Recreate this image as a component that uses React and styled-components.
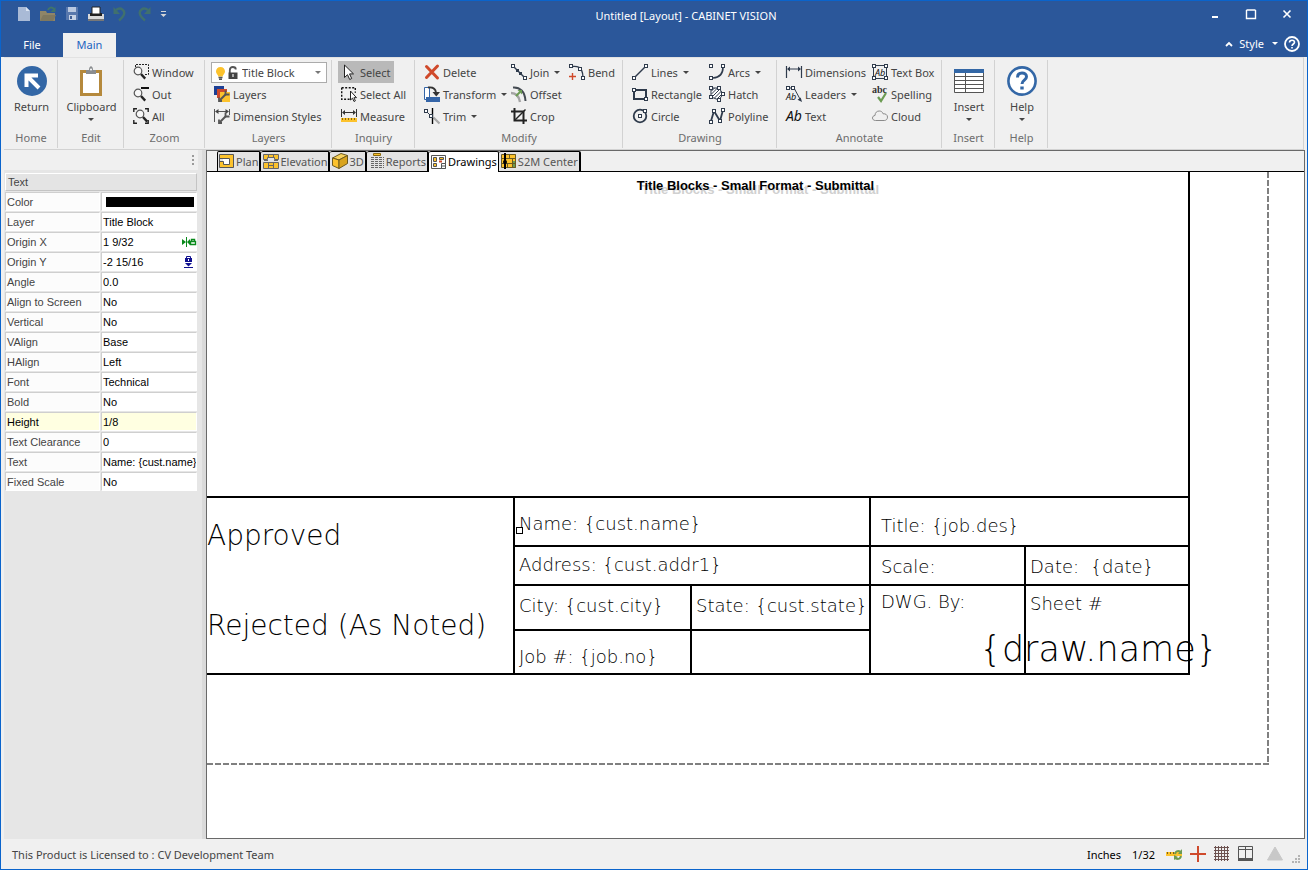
import React from "react";
import styled, { createGlobalStyle, css } from "styled-components";

const UI_FONT = '"Noto Sans", "Open Sans", sans-serif';
const GRID_FONT = '"Liberation Sans", Arial, sans-serif';
const DRAFT_FONT = '"DejaVu Sans Light", "DejaVu Sans", sans-serif';

const INK = "#2f3b4c";
const BLUE = "#2b579a";
const GOLD = "#fcc22c";

const GlobalStyle = createGlobalStyle`
  *, *::before, *::after { box-sizing: border-box; }
  body { margin: 0; font-family: ${UI_FONT}; font-size: 11px; color: #444; background: #f0f0f0; }
  button, input, select { font: inherit; color: inherit; margin: 0; }
  svg { display: block; flex: none; overflow: visible; }
`;

/* ---------- window shell ---------- */

const Window = styled.div`
  display: flex;
  flex-direction: column;
  min-height: 100vh;
  border: 1px solid #0a64cc;
  background: #f0f0f0;
`;

const TitleArea = styled.header`
  display: flex;
  flex-direction: column;
  background: ${BLUE};
  color: #fff;
`;

const TitleBar = styled.div`
  display: flex;
  align-items: center;
  height: 32px;
  padding: 0 8px 6px 12px;
`;

const QuickAccess = styled.div`
  display: flex;
  gap: 2px;
`;

const PlainButton = styled.button`
  display: flex;
  align-items: center;
  justify-content: center;
  padding: 0;
  border: 0;
  background: none;
`;

const QuickButton = styled(PlainButton)`
  width: ${(p) => (p.$narrow ? "12px" : "22px")};
  height: 20px;
`;

const WindowTitle = styled.h1`
  flex: 1;
  margin: 4px 0 0;
  font-size: 11px;
  font-weight: 400;
  line-height: 16px;
  text-align: center;
`;

const WindowControls = styled.div`
  display: flex;
  gap: 12px;
`;

const WindowButton = styled(PlainButton)`
  width: 24px;
  height: 20px;
`;

const RibbonTabs = styled.nav`
  display: flex;
  align-items: stretch;
  height: 24px;
  padding-right: 7px;
`;

const RibbonTab = styled(PlainButton)`
  width: ${(p) => (p.$active ? "53px" : "62px")};
  padding-bottom: 2px;
  background: ${(p) => (p.$active ? "#f0f0f0" : "transparent")};
  color: ${(p) => (p.$active ? "#1c63c0" : "#fff")};
`;

const RibbonTools = styled.div`
  display: flex;
  align-items: center;
  gap: 6px;
  margin-left: auto;
  padding-bottom: 3px;
`;

const StyleButton = styled(PlainButton)`
  gap: 6px;
  color: #fff;
`;

/* ---------- ribbon ---------- */

const Ribbon = styled.div`
  display: flex;
  height: 93px;
  margin: 0 3px;
  padding-top: 2px;
  border: 1px solid #d2d2d2;
  border-top-color: #e2e2e2;
  border-left: 0;
`;

const Group = styled.section`
  display: flex;
  flex-direction: column;
  width: ${(p) => p.$width}px;
  height: 88px;
  border-right: 1px solid #d2d2d2;
`;

const GroupBody = styled.div`
  display: grid;
  grid-template-columns: ${(p) => p.$columns || "1fr"};
  align-content: start;
  height: 69px;
  padding: ${(p) => (p.$big ? "6px 0 0 2px" : "1px 0 0 6px")};
  justify-items: ${(p) => (p.$big ? "center" : "start")};
`;

const GroupLabel = styled.h2`
  margin: 0;
  padding-left: 1px;
  font-size: 11px;
  font-weight: 400;
  line-height: 18px;
  text-align: center;
  color: #6d6d6d;
`;

const Column = styled.div`
  display: flex;
  flex-direction: column;
  align-items: flex-start;
`;

const SmallButton = styled.button`
  display: flex;
  align-items: center;
  gap: 3px;
  height: 22px;
  padding: 0 3px;
  border: 0;
  white-space: nowrap;
  color: #444;
  background: ${(p) => (p.$pressed ? "#b9b9b9" : "transparent")};
`;

const BigButton = styled.button`
  display: flex;
  flex-direction: column;
  align-items: center;
  padding: 0;
  border: 0;
  background: none;
  color: #444;
  line-height: 22px;
`;

const Caret = styled.span`
  width: 0;
  height: 0;
  margin-left: ${(p) => (p.$flush ? "0" : "2px")};
  border: 3px solid transparent;
  border-top-color: ${(p) => p.$color || "#444"};
  border-bottom: 0;
`;

const LayerPicker = styled.label`
  display: flex;
  align-items: center;
  width: 116px;
  height: 21px;
  margin-top: 1px;
  padding: 0 5px 0 2px;
  border: 1px solid #ababab;
  background: #fff;
`;

const LayerSelect = styled.select`
  flex: 1;
  min-width: 0;
  padding: 0 0 0 3px;
  border: 0;
  appearance: none;
  background: none;
`;

/* ---------- work area ---------- */

const WorkArea = styled.div`
  display: flex;
  flex: 1;
  margin: 0 2px 0 3px;
`;

const SidePanel = styled.aside`
  display: flex;
  flex-direction: column;
  width: 202px;
  padding-right: 4px;
  background: #e6e6e6;
  border-right: 4px solid #dadada;
`;

const PanelGrip = styled.div`
  display: flex;
  flex-direction: column;
  align-items: flex-end;
  justify-content: center;
  gap: 2px;
  height: 20px;
  padding-right: 4px;
  background: #f0f0f0;
`;

const GripDot = styled.span`
  width: 2px;
  height: 2px;
  background: #9a9a9a;
`;

const PropertyTable = styled.table`
  width: 100%;
  margin-top: 2px;
  border-collapse: separate;
  border-spacing: 1px 1px;
  table-layout: fixed;
  font-family: ${GRID_FONT};
  font-size: 11px;
`;

const PropertyHeading = styled.th`
  height: 18px;
  padding: 0 2px;
  border: 1px solid #fff;
  border-right: 1px solid #c4c4c4;
  border-bottom: 1px solid #c4c4c4;
  background: #e4e4e4;
  font-weight: 400;
  text-align: left;
`;

const cell = css`
  height: 19px;
  padding: 0 0 0 1px;
  border: 1px solid #cfcfcf;
  border-right-color: #fff;
  border-bottom-color: #fff;
  font-weight: 400;
  text-align: left;
  white-space: nowrap;
`;

const PropertyName = styled.th`
  ${cell}
  background: ${(p) => (p.$active ? "#ffffe1" : "#fcfcfc")};
  color: ${(p) => (p.$active ? "#000" : "#444")};
`;

const PropertyValue = styled.td`
  ${cell}
  background: ${(p) => (p.$active ? "#ffffe1" : "#fff")};
  color: #000;
`;

const ValueRow = styled.div`
  display: flex;
  align-items: center;
`;

const ValueInput = styled.input`
  flex: 1;
  min-width: 0;
  height: 17px;
  padding: 0;
  border: 0;
  background: transparent;
`;

const Swatch = styled.button`
  display: block;
  width: 88px;
  height: 10px;
  margin: 0 auto;
  padding: 0;
  border: 0;
  background: #000;
`;

const Document = styled.main`
  display: flex;
  flex: 1;
  flex-direction: column;
  min-width: 0;
  border: 1px solid #696969;
`;

const DocumentTabs = styled.div`
  display: flex;
  height: 21px;
  padding-left: 10px;
  background: #f0f0f0;
  border-bottom: 1px solid #000;
`;

const DocumentTab = styled.button`
  display: flex;
  align-items: center;
  gap: 1px;
  height: ${(p) => (p.$active ? "21px" : "20px")};
  padding: 0 1px 1px;
  padding-left: ${(p) => (p.$first ? "1px" : "2px")};
  border: 1px solid #000;
  border-bottom: 0;
  border-left-width: ${(p) => (p.$first ? "1px" : "0")};
  border-right-width: ${(p) => (p.$active ? "1px" : "2px")};
  border-radius: 2px 2px 0 0;
  background: ${(p) => (p.$active ? "#fff" : "#e3e3e3")};
  color: ${(p) => (p.$active ? "#000" : "#555")};
  white-space: nowrap;
`;

const Canvas = styled.div`
  flex: 1;
  padding-right: 35px;
  background: #fff;
  color: #000;
  overflow: hidden;
`;

const Sheet = styled.div`
  position: relative;
  padding: 0 79px 90px 0;
  background:
    repeating-linear-gradient(to bottom, #808080 0 6px, transparent 6px 8px) top right / 2px 100% no-repeat,
    repeating-linear-gradient(to left, #808080 0 6px, transparent 6px 8px) bottom left / 100% 2px no-repeat;
`;

const SheetTitle = styled.h2`
  position: absolute;
  top: 5px;
  left: 35px;
  right: 0;
  margin: 0;
  font: 700 13px/18px ${GRID_FONT};
  text-align: center;
  text-shadow: 5px 4px 0 #d0d0d0;
`;

const Frame = styled.div`
  border-right: 2px solid #000;
  border-bottom: 2px solid #000;
  padding-top: 324px;
`;

const TitleBlock = styled.div`
  position: relative;
  display: grid;
  grid-template-columns: 306fr 177fr 179fr 155fr 164fr;
  grid-template-rows: 49px 39px 45px 44px;
  font-family: ${DRAFT_FONT};
  font-weight: 200;
`;

const BlockCell = styled.div`
  grid-column: ${(p) => p.$col};
  grid-row: ${(p) => p.$row};
  min-width: 0;
  padding: ${(p) => p.$top || 0}px 0 0 ${(p) => (p.$wide ? "10px" : "4px")};
  border-top: 2px solid #000;
  border-left: 2px solid #000;
  font-size: 18px;
  line-height: 24px;
  white-space: pre;
`;

const ApprovalCell = styled.div`
  display: flex;
  flex-direction: column;
  gap: 54px;
  grid-column: 1;
  grid-row: 1 / -1;
  padding-top: 20px;
  border-top: 2px solid #000;
  font-size: 28px;
  line-height: 36px;
  white-space: nowrap;
`;

const DrawingName = styled.div`
  position: absolute;
  right: -30px;
  bottom: 0;
  font-size: 35px;
  line-height: 48px;
`;

const GripHandle = styled.span`
  position: relative;
`;

const HandleBox = styled.span`
  position: absolute;
  left: -3px;
  bottom: 0;
  width: 7px;
  height: 7px;
  border: 1px solid #000;
  background: #fff;
`;

/* ---------- status bar ---------- */

const StatusBar = styled.footer`
  display: flex;
  align-items: center;
  height: 30px;
  padding: 0 6px 0 11px;
`;

const StatusTools = styled.div`
  display: flex;
  align-items: center;
  gap: 8px;
  margin-left: auto;
  color: #000;
`;

const StatusText = styled.span`
  margin-right: 3px;
`;

const StatusViews = styled.div`
  display: flex;
  gap: 8px;
  margin-right: 5px;
`;

/* ---------- icons ---------- */

const Svg = ({ w = 16, h = 16, children, ...rest }) => (
  <svg width={w} height={h} viewBox={`0 0 ${w} ${h}`} fill="none" aria-hidden="true" {...rest}>
    {children}
  </svg>
);

const Node = ({ x, y, c = INK }) => (
  <rect x={x + 0.5} y={y + 0.5} width="3" height="3" fill="#fff" stroke={c} />
);

const Lens = () => (
  <>
    <circle cx="5" cy="7" r="3.8" fill="#f7f7f7" stroke="#555" strokeWidth="1.2" />
    <path d="M8 10l4.2 4.6" stroke="#222" strokeWidth="2.4" />
  </>
);

const Wrench = () => (
  <>
    <path d="M6 14l6-6" stroke="#555" strokeWidth="2" />
    <path d="M11.500 4.500v4h4M5 11.500v3.500h3" stroke="#555" strokeWidth="1.800" />
  </>
);

const icons = {
  zoomWindow: (
    <Svg>
      <path d="M2.500 3V.5H15.500v10H12" stroke="#222" strokeDasharray="2 1" />
      <Lens />
    </Svg>
  ),
  zoomOut: (
    <Svg>
      <Lens />
      <path d="M8 2h8" stroke="#111" strokeWidth="2" />
    </Svg>
  ),
  zoomAll: (
    <Svg>
      <path d="M.8 4V.8H4M12 .8h3.200V4M.8 12v3.200H4M12 15.200h3.200V12" stroke="#222" strokeWidth="1.400" />
      <g transform="translate(2 -1)"><Lens /></g>
    </Svg>
  ),
  layers: (
    <Svg>
      <path d="M0 0h10v9H0z" fill="#1d3f94" />
      <path d="M3 3h10v9H3z" fill="#cf4a2c" />
      <path d="M6 6h10v10H6z" fill={GOLD} />
      <Wrench />
    </Svg>
  ),
  dimStyles: (
    <Svg>
      <path d="M.5 1v13M15.500 1v6M2 3.500h12" stroke="#555" />
      <path d="M1 3.500L4.500 1v5zM15 3.500L11.500 1v5z" fill="#444" />
      <Wrench />
    </Svg>
  ),
  bulb: (
    <Svg w={13} h={16}>
      <path d="M6.500 2C3.800 2 2 4 2 6.300c0 1.700.900 2.700 1.700 3.700.4.500.5 1.200.5 1.500h4.600c0-.3.100-1 .500-1.500.8-1 1.700-2 1.700-3.700C11 4 9.200 2 6.500 2z" fill={GOLD} />
      <path d="M4.500 12.500h4M5 14.200h3" stroke="#555" strokeWidth="1.400" />
    </Svg>
  ),
  lock: (
    <Svg w={12} h={16}>
      <path d="M2.800 8V5.200C2.800 3 4.200 2 5.800 2s3 1 3 2.400" stroke="#555" strokeWidth="1.800" />
      <path d="M1.500 7.500h9v6.500h-9z" fill="#444" />
      <path d="M6 9v3" stroke="#ddd" strokeWidth="1.400" />
    </Svg>
  ),
  select: (
    <Svg>
      <path d="M3.500 1v12.500l3-2.800 2.200 4.800 2-1-2.200-4.600h4z" fill="#fff" stroke="#222" />
    </Svg>
  ),
  selectAll: (
    <Svg>
      <path d="M.7 1.700h13.600v5M.7 1.700v11.600H9" stroke="#111" strokeWidth="1.400" strokeDasharray="2 1.500" />
      <path d="M9.500 5v9l2-1.800 1.500 3.300 1.400-.7-1.500-3.100h2.600z" fill="#fff" stroke="#222" />
    </Svg>
  ),
  measure: (
    <Svg>
      <path d="M.5 1v8M15.500 1v8M2 4.500h12" stroke="#333" />
      <path d="M1 4.500L4 2v5zM15 4.500L12 2v5z" fill="#333" />
      <path d="M0 10h16v4H0z" fill={GOLD} />
      <path d="M1.500 10v2M4.500 10v2M7.500 10v2M10.500 10v2M13.500 10v2" stroke="#8a6a10" />
    </Svg>
  ),
  delete: (
    <Svg>
      <path d="M2.500 2.500l11 11.500M13.500 2L2.500 13.500" stroke="#d0492a" strokeWidth="3" strokeLinecap="round" />
    </Svg>
  ),
  transform: (
    <Svg>
      <path d="M.5 1.500h5v12h-5z" fill="#fff" stroke="#3465a8" />
      <path d="M2 11h14v5H2z" fill="#3465a8" />
      <path d="M4 1.500c4-.5 7.500 1 8 5" stroke="#333" strokeWidth="1.800" />
      <path d="M8.500 6H16l-3.700 4.500z" fill="#333" />
    </Svg>
  ),
  trim: (
    <Svg>
      <path d="M2 3l5 5" stroke={INK} />
      <path d="M9.500 9.500l6 6" stroke="#a8a8a8" strokeWidth="2.200" />
      <path d="M8.500 0v16" stroke="#000" strokeWidth="1.400" />
      <Node x={0} y={1} /><Node x={5} y={6} />
    </Svg>
  ),
  join: (
    <Svg>
      <path d="M2 2l12 12" stroke={INK} strokeWidth="1.400" />
      <Node x={0} y={0} /><Node x={12} y={12} />
      <path d="M5 5h3v3H5zM8 8h3v3H8z" fill={INK} />
    </Svg>
  ),
  offset: (
    <Svg>
      <path d="M2 1.500c7-.5 12 4 12.500 13.500" stroke="#444b52" strokeWidth="2" />
      <path d="M0 7c4.500 0 8 3 9 9" stroke="#a4a4a4" strokeWidth="2.400" />
      <path d="M5 10l4-4" stroke="#6b9b52" strokeWidth="2" />
      <path d="M6.500 4H11v4.500z" fill="#6b9b52" />
    </Svg>
  ),
  crop: (
    <Svg>
      <path d="M3.500 0v12.500H16M0 3.500h12.500V16" stroke="#222" strokeWidth="2" />
      <path d="M4 12L14.500 1.500" stroke="#222" strokeWidth="1.400" />
    </Svg>
  ),
  bend: (
    <Svg>
      <path d="M3 2.500c5-.5 8.500 1 9.500 3.500 1 2 1.500 5 1.500 8" stroke={INK} strokeWidth="1.400" />
      <Node x={0} y={0} /><Node x={9} y={3} /><Node x={12} y={12} />
      <path d="M3.500 9v7M0 12.500h7" stroke="#d0492a" strokeWidth="1.400" />
    </Svg>
  ),
  lines: (
    <Svg>
      <path d="M3 13L13 3" stroke={INK} strokeWidth="1.400" />
      <Node x={0} y={12} /><Node x={12} y={0} />
    </Svg>
  ),
  rectangle: (
    <Svg>
      <path d="M2 4h12v9H2z" stroke={INK} strokeWidth="2" />
      <Node x={0} y={2} /><Node x={12} y={11} />
    </Svg>
  ),
  circle: (
    <Svg>
      <circle cx="8" cy="8" r="6.300" stroke={INK} strokeWidth="1.800" />
      <Node x={6} y={6} /><Node x={11} y={1} />
    </Svg>
  ),
  arcs: (
    <Svg>
      <path d="M14 3c0 7-3 10.500-10 11" stroke={INK} strokeWidth="1.600" />
      <Node x={0} y={0} /><Node x={12} y={0} /><Node x={0} y={12} />
    </Svg>
  ),
  hatch: (
    <Svg>
      <path d="M2 2h8l4 6-4 6-8-3z" fill="#fff" stroke={INK} />
      <path d="M2.500 5L5.500 2M2.500 8l6-6M3 11l8-8M5.500 12l7-7M8 13l5.500-5.500" stroke={INK} />
      <Node x={0} y={0} /><Node x={8} y={0} /><Node x={12} y={6} /><Node x={0} y={9} /><Node x={8} y={12} />
    </Svg>
  ),
  polyline: (
    <Svg>
      <path d="M2 13L5 3l6 10 3-11" stroke={INK} strokeWidth="1.800" />
      <Node x={0} y={12} /><Node x={3} y={1} /><Node x={9} y={11} /><Node x={12} y={0} />
    </Svg>
  ),
  dimensions: (
    <Svg>
      <path d="M.5 2v12M15.500 2v12M2 5h12" stroke={INK} strokeWidth="1.200" />
      <path d="M1 5l3-2.500v5zM15 5l-3-2.500v5z" fill={INK} />
    </Svg>
  ),
  leaders: (
    <Svg>
      <path d="M3 2h5l6 11" stroke={INK} />
      <path d="M16 16l-4.500-2.200 3.200-2.300z" fill={INK} />
      <Node x={0} y={0} /><Node x={5} y={0} />
      <text x="0" y="14" fontSize="9" fontStyle="italic" fill="#111" fontFamily={UI_FONT}>Ab</text>
    </Svg>
  ),
  text: (
    <Svg>
      <text x="0" y="13" fontSize="14" fontStyle="italic" fill="#111" fontFamily={UI_FONT}>Ab</text>
    </Svg>
  ),
  textBox: (
    <Svg>
      <path d="M1.500 1.500h13v13h-13z" stroke={INK} />
      <Node x={0} y={0} /><Node x={12} y={0} /><Node x={0} y={12} /><Node x={12} y={12} />
      <text x="3" y="12" fontSize="9" fontStyle="italic" fill="#111" fontFamily={UI_FONT}>Ab</text>
    </Svg>
  ),
  spelling: (
    <Svg>
      <text x="0" y="7" fontSize="10" fontWeight="700" fill="#333" fontFamily='"Liberation Serif", serif'>abc</text>
      <path d="M6 11l3 4 5-8" stroke="#6b9b52" strokeWidth="2.200" />
    </Svg>
  ),
  cloud: (
    <Svg>
      <path d="M3.500 12.500C1.500 12.500.500 11.300.500 10S1.500 7.500 3 7.500C3 4.500 5 3 7.200 3c2 0 3.300 1 3.900 2.800 2.400-.3 4.400 1 4.400 3.300 0 2-1.300 3.400-3.200 3.400z" stroke="#8a8a8a" />
    </Svg>
  ),
  return: (
    <Svg w={30} h={30}>
      <circle cx="15" cy="15" r="15" fill="#3367a6" />
      <path d="M9.500 21V9.500H21M10 10l12 12" stroke="#fff" strokeWidth="4" />
    </Svg>
  ),
  clipboard: (
    <Svg w={24} h={30}>
      <path d="M2.500 5.500h19v23h-19z" fill="#fff" stroke="#b5893c" strokeWidth="3" />
      <path d="M7 8V4h3c0-5 4-5 4 0h3v4z" fill="#8a8d90" />
      <circle cx="12" cy="3.500" r="1" fill="#fff" />
    </Svg>
  ),
  insert: (
    <Svg w={30} h={30}>
      <path d="M.5 3.500h29v23H.5z" fill="#fff" stroke="#555" />
      <path d="M0 3h30v4H0z" fill="#3367a6" />
      <path d="M0 10.500h30M0 14.500h30M0 18.500h30M0 22.500h30M11.500 7v19" stroke="#555" />
    </Svg>
  ),
  help: (
    <Svg w={30} h={30}>
      <circle cx="15" cy="15" r="13.600" fill="#fff" stroke="#3367a6" strokeWidth="2.600" />
      <path d="M10.500 11.500c0-3 2-4.500 4.500-4.500s4.500 1.400 4.500 3.800c0 3.500-4.500 3.300-4.500 7.200" stroke="#3367a6" strokeWidth="3" />
      <path d="M13.300 20.500h3.400v3h-3.400z" fill="#3367a6" />
    </Svg>
  ),
  newDoc: (
    <Svg>
      <path d="M2 1h8l4 4v10H2z" fill="#a9bad6" />
      <path d="M10 1v4h4z" fill="#dbe4f2" />
    </Svg>
  ),
  open: (
    <Svg>
      <path d="M0 5h6l1 2h8v8H0z" fill="#8f8568" />
      <path d="M3 9h13l-3 6H0z" fill="#7f785f" />
      <path d="M8 4c1-3 4-3 6-1" stroke="#40756a" strokeWidth="2" />
      <path d="M15.500 1v5h-5z" fill="#40756a" />
    </Svg>
  ),
  save: (
    <Svg>
      <path d="M2 1h12v13H2z" fill="#5878ad" />
      <path d="M4 1h8v5H4z" fill="#b9c8e0" />
      <path d="M5 9h7v5H5z" fill="#c6d2e6" />
      <path d="M6 10h2v3H6z" fill="#3f5f96" />
    </Svg>
  ),
  print: (
    <Svg>
      <path d="M0 8h16v6H0z" fill="#d9d9d9" />
      <path d="M2 7h12v3H2z" fill="#222" />
      <path d="M4 1h8v7H4z" fill="#fff" stroke="#222" />
      <path d="M0 13h16v2H0z" fill="#777" />
    </Svg>
  ),
  undo: (
    <Svg>
      <path d="M4 4c5-4 10 1 7.500 5.500-.8 1.700-2.500 3.300-4.500 5" stroke="#40706e" strokeWidth="2.400" />
      <path d="M1.500 1v7h6.500z" fill="#40706e" />
    </Svg>
  ),
  redo: (
    <Svg>
      <path d="M12 4C7 0 2 5 4.500 9.500c.8 1.700 2.500 3.300 4.500 5" stroke="#40706e" strokeWidth="2.400" />
      <path d="M14.500 1v7H8z" fill="#40706e" />
    </Svg>
  ),
  more: (
    <Svg w={7} h={8}>
      <path d="M1 1.500h5" stroke="#d6d6d6" />
      <path d="M.5 4h6L3.500 7z" fill="#d6d6d6" />
    </Svg>
  ),
  minimize: <Svg w={10} h={10}><path d="M2 8h6" stroke="#fff" strokeWidth="2" /></Svg>,
  maximize: <Svg w={10} h={10}><path d="M.5 1h9M.5 1v8.500h9V1" stroke="#fff" strokeWidth="1.400" /></Svg>,
  close: <Svg w={10} h={10}><path d="M1.500 1.500l7 7M8.500 1.500l-7 7" stroke="#fff" strokeWidth="1.600" /></Svg>,
  collapse: <Svg w={8} h={6}><path d="M1 5l3-3 3 3" stroke="#fff" strokeWidth="1.800" /></Svg>,
  helpSmall: (
    <Svg w={16} h={16}>
      <circle cx="8" cy="8" r="7" stroke="#fff" strokeWidth="1.800" />
      <path d="M5.500 6.500C5.500 5 6.500 4.200 8 4.200s2.500.8 2.500 2.100C10.500 8 8 8 8 10" stroke="#fff" strokeWidth="1.600" />
      <path d="M7.200 11h1.600v1.600H7.200z" fill="#fff" />
    </Svg>
  ),
  plan: (
    <Svg>
      <path d="M.5 1.500h14v13H.5z" fill={GOLD} stroke="#555" />
      <path d="M1 5.500h9.500v6H4.500v-3H1z" fill="#fff" stroke="#555" />
      <path d="M1 6h3v2H1z" fill="#e3e3e3" />
    </Svg>
  ),
  elevation: (
    <Svg>
      <path d="M.5 1.500h15v5h-4v-2h-7v2h-4zM.5 9.500h15v6H.5z" fill={GOLD} stroke="#666" />
      <path d="M5.500 1.500v3M10.500 1.500v3M5.500 9.500v6M10.500 9.500v6M5.500 12.500h5M1 7.500h4M11 7.500h4" stroke="#666" />
    </Svg>
  ),
  cube: (
    <Svg>
      <path d="M.5 5L9 .5l6.500 2L7 7z" fill="#f8d25c" stroke="#6d5a1e" />
      <path d="M.5 5L7 7v8.500L.500 12.500z" fill={GOLD} stroke="#6d5a1e" />
      <path d="M7 7l8.500-4.500v8L7 15.500z" fill="#d9a41e" stroke="#6d5a1e" />
    </Svg>
  ),
  reports: (
    <Svg>
      <path d="M4.500.500h7v2h-7z" fill={GOLD} stroke="#8a6a10" />
      <path d="M2 4.500h13M2 6.500h13M2 8.500h13M2 10.500h13M2 12.500h13M2 14.500h13" stroke="#666" strokeDasharray="3 1" />
    </Svg>
  ),
  drawings: (
    <Svg>
      <path d="M.5 1.500h14v13H.5z" fill="#fff" stroke="#555" />
      <path d="M2.500 3.500h3v4h-3zM8.500 3.500h4v2h-4zM2.500 9.500h3v3h-3z" fill={GOLD} stroke="#555" />
      <path d="M8 7.500h3" stroke="#cf4a2c" strokeWidth="2" />
      <path d="M10.500 9.500h4v5h-4zM10.500 12h4" fill="#fff" stroke="#555" />
    </Svg>
  ),
  s2m: (
    <Svg>
      <path d="M1 1h14v14H1z" fill={GOLD} />
      <path d="M11 8h4v7h-4z" fill="#6b9b52" />
      <path d="M.5 1.500h14v13H.5zM1 5.500h14M1 10.500h14M8.500 1v4M11.500 5v10M6.500 10v5" stroke="#6b5a20" />
      <path d="M4 0v16" stroke="#000" strokeWidth="2" />
      <circle cx="4" cy="9" r="2" fill="#000" />
    </Svg>
  ),
  lockX: (
    <Svg w={14} h={10}>
      <path d="M4.500 0v10" stroke="#0a8a1c" />
      <path d="M0 2l4 3-4 3zM8 2L5 5l3 3z" fill="#0a8a1c" />
      <path d="M8.500 4.500h5v3h-5zM9.500 4V2.500h3V4" stroke="#0a8a1c" strokeWidth="1.400" />
    </Svg>
  ),
  lockY: (
    <Svg w={14} h={12}>
      <path d="M4.500 2.500V.5h4v2" stroke="#101090" />
      <path d="M3 2h7v4H3z" fill="#101090" />
      <path d="M6 3h1v2H6z" fill="#fff" />
      <path d="M3 7h7L6.500 10.500z" fill="#101090" />
      <path d="M2 11.500h9" stroke="#101090" />
    </Svg>
  ),
  ruler: (
    <Svg>
      <path d="M0 6h16v4H0z" fill={GOLD} />
      <path d="M1.500 6v2M4.500 6v2M7.500 6v2" stroke="#7a6020" />
      <path d="M9 8c1-4 4-3 6-2M15 10c-1 4-4 3-6 2" stroke="#6b9b52" strokeWidth="2" />
      <path d="M16 3v5h-4zM8 14V9l4 2z" fill="#6b9b52" />
    </Svg>
  ),
  cross: <Svg><path d="M8 0v16M0 8h16" stroke="#cf4a2c" strokeWidth="2" /></Svg>,
  gridDots: (
    <Svg>
      <path d="M1.500 0v15M4.500 0v15M7.500 0v15M10.500 0v15M13.500 0v15M0 1.500h15M0 4.500h15M0 7.500h15M0 10.500h15M0 13.500h15" stroke="#6d5250" />
    </Svg>
  ),
  splitView: (
    <Svg>
      <path d="M.5.500h14v14H.5zM7.500 0v13M1 3.500h14" stroke="#555" />
      <path d="M0 12h15v3H0z" fill="#555" />
    </Svg>
  ),
  warning: <Svg><path d="M8 1l7.500 13H.5z" fill="#c8c8c8" stroke="#c8c8c8" strokeLinejoin="round" /></Svg>,
  sizeGrip: (
    <Svg w={10} h={16}>
      <path d="M7 9h2v2H7zM4 12h2v2H4zM7 12h2v2H7zM1 15h2v2H1zM4 15h2v2H4zM7 15h2v2H7z" fill="#b4b4b4" />
    </Svg>
  ),
};

/* ---------- composed parts ---------- */

const Tool = ({ icon, label, menu, pressed }) => (
  <SmallButton type="button" $pressed={pressed} aria-pressed={pressed}>
    {icons[icon]}
    {label}
    {menu && <Caret />}
  </SmallButton>
);

const BigTool = ({ icon, label, menu }) => (
  <BigButton type="button">
    {icons[icon]}
    {label}
    {menu && <Caret $flush />}
  </BigButton>
);

const RibbonGroup = ({ label, width, columns, big, children }) => (
  <Group $width={width} aria-label={label}>
    <GroupBody $columns={columns} $big={big}>{children}</GroupBody>
    <GroupLabel>{label}</GroupLabel>
  </Group>
);

const properties = [
  ["Color", null],
  ["Layer", "Title Block"],
  ["Origin X", "1 9/32", "lockX"],
  ["Origin Y", "-2 15/16", "lockY"],
  ["Angle", "0.0"],
  ["Align to Screen", "No"],
  ["Vertical", "No"],
  ["VAlign", "Base"],
  ["HAlign", "Left"],
  ["Font", "Technical"],
  ["Bold", "No"],
  ["Height", "1/8"],
  ["Text Clearance", "0"],
  ["Text", "Name: {cust.name}"],
  ["Fixed Scale", "No"],
];

const documentTabs = [
  ["plan", "Plan"],
  ["elevation", "Elevation"],
  ["cube", "3D"],
  ["reports", "Reports"],
  ["drawings", "Drawings"],
  ["s2m", "S2M Center"],
];

const quickActions = [
  ["newDoc", "New"],
  ["open", "Open"],
  ["save", "Save"],
  ["print", "Print"],
  ["undo", "Undo"],
  ["redo", "Redo"],
];

export default function App() {
  return (
    <>
      <GlobalStyle />
      <Window>
        <TitleArea>
          <TitleBar>
            <QuickAccess>
              {quickActions.map(([icon, label]) => (
                <QuickButton key={icon} type="button" aria-label={label}>{icons[icon]}</QuickButton>
              ))}
              <QuickButton $narrow type="button" aria-label="Customize">{icons.more}</QuickButton>
            </QuickAccess>
            <WindowTitle>Untitled [Layout] - CABINET VISION</WindowTitle>
            <WindowControls>
              <WindowButton type="button" aria-label="Minimize">{icons.minimize}</WindowButton>
              <WindowButton type="button" aria-label="Maximize">{icons.maximize}</WindowButton>
              <WindowButton type="button" aria-label="Close">{icons.close}</WindowButton>
            </WindowControls>
          </TitleBar>
          <RibbonTabs>
            <RibbonTab type="button">File</RibbonTab>
            <RibbonTab type="button" $active>Main</RibbonTab>
            <RibbonTools>
              <PlainButton type="button" aria-label="Collapse ribbon">{icons.collapse}</PlainButton>
              <StyleButton type="button">Style<Caret $color="#fff" /></StyleButton>
              <PlainButton type="button" aria-label="Help">{icons.helpSmall}</PlainButton>
            </RibbonTools>
          </RibbonTabs>
        </TitleArea>

        <Ribbon>
          <RibbonGroup label="Home" width={54} big>
            <BigTool icon="return" label="Return" />
          </RibbonGroup>
          <RibbonGroup label="Edit" width={66} big>
            <BigTool icon="clipboard" label="Clipboard" menu />
          </RibbonGroup>
          <RibbonGroup label="Zoom" width={81}>
            <Column>
              <Tool icon="zoomWindow" label="Window" />
              <Tool icon="zoomOut" label="Out" />
              <Tool icon="zoomAll" label="All" />
            </Column>
          </RibbonGroup>
          <RibbonGroup label="Layers" width={127}>
            <Column>
              <LayerPicker>
                {icons.bulb}
                {icons.lock}
                <LayerSelect aria-label="Current layer" defaultValue="Title Block">
                  <option>Title Block</option>
                </LayerSelect>
                <Caret $flush $color="#777" />
              </LayerPicker>
              <Tool icon="layers" label="Layers" />
              <Tool icon="dimStyles" label="Dimension Styles" />
            </Column>
          </RibbonGroup>
          <RibbonGroup label="Inquiry" width={83}>
            <Column>
              <Tool icon="select" label="Select" pressed />
              <Tool icon="selectAll" label="Select All" />
              <Tool icon="measure" label="Measure" />
            </Column>
          </RibbonGroup>
          <RibbonGroup label="Modify" width={208} columns="87px 58px 1fr">
            <Column>
              <Tool icon="delete" label="Delete" />
              <Tool icon="transform" label="Transform" menu />
              <Tool icon="trim" label="Trim" menu />
            </Column>
            <Column>
              <Tool icon="join" label="Join" menu />
              <Tool icon="offset" label="Offset" />
              <Tool icon="crop" label="Crop" />
            </Column>
            <Column>
              <Tool icon="bend" label="Bend" />
            </Column>
          </RibbonGroup>
          <RibbonGroup label="Drawing" width={154} columns="77px 1fr">
            <Column>
              <Tool icon="lines" label="Lines" menu />
              <Tool icon="rectangle" label="Rectangle" />
              <Tool icon="circle" label="Circle" />
            </Column>
            <Column>
              <Tool icon="arcs" label="Arcs" menu />
              <Tool icon="hatch" label="Hatch" />
              <Tool icon="polyline" label="Polyline" />
            </Column>
          </RibbonGroup>
          <RibbonGroup label="Annotate" width={165} columns="86px 1fr">
            <Column>
              <Tool icon="dimensions" label="Dimensions" />
              <Tool icon="leaders" label="Leaders" menu />
              <Tool icon="text" label="Text" />
            </Column>
            <Column>
              <Tool icon="textBox" label="Text Box" />
              <Tool icon="spelling" label="Spelling" />
              <Tool icon="cloud" label="Cloud" />
            </Column>
          </RibbonGroup>
          <RibbonGroup label="Insert" width={53} big>
            <BigTool icon="insert" label="Insert" menu />
          </RibbonGroup>
          <RibbonGroup label="Help" width={53} big>
            <BigTool icon="help" label="Help" menu />
          </RibbonGroup>
        </Ribbon>

        <WorkArea>
          <SidePanel>
            <PanelGrip><GripDot /><GripDot /><GripDot /></PanelGrip>
            <PropertyTable>
              <colgroup><col width="95" /><col /></colgroup>
              <thead>
                <tr><PropertyHeading colSpan={2}>Text</PropertyHeading></tr>
              </thead>
              <tbody>
                {properties.map(([name, value, lock]) => {
                  const id = `prop-${name.replace(/ /g, "-")}`;
                  const active = name === "Height";
                  return (
                    <tr key={name}>
                      <PropertyName scope="row" $active={active}>
                        <label htmlFor={id}>{name}</label>
                      </PropertyName>
                      <PropertyValue $active={active}>
                        {value === null ? (
                          <Swatch id={id} type="button" />
                        ) : (
                          <ValueRow>
                            <ValueInput id={id} defaultValue={value} />
                            {lock && icons[lock]}
                          </ValueRow>
                        )}
                      </PropertyValue>
                    </tr>
                  );
                })}
              </tbody>
            </PropertyTable>
          </SidePanel>

          <Document>
            <DocumentTabs>
              {documentTabs.map(([icon, label], i) => (
                <DocumentTab key={icon} type="button" $first={i === 0} $active={icon === "drawings"}>
                  {icons[icon]}
                  {label}
                </DocumentTab>
              ))}
            </DocumentTabs>
            <Canvas>
              <Sheet>
                <SheetTitle>Title Blocks - Small Format - Submittal</SheetTitle>
                <Frame>
                  <TitleBlock>
                    <ApprovalCell>
                      <span>Approved</span>
                      <span>Rejected (As Noted)</span>
                    </ApprovalCell>
                    <BlockCell $col="2 / 4" $row="1" $top={14}>
                      <GripHandle>Name: {"{cust.name}"}<HandleBox /></GripHandle>
                    </BlockCell>
                    <BlockCell $col="2 / 4" $row="2" $top={6}>Address: {"{cust.addr1}"}</BlockCell>
                    <BlockCell $col="2" $row="3" $top={8}>City: {"{cust.city}"}</BlockCell>
                    <BlockCell $col="3" $row="3" $top={8}>State: {"{cust.state}"}</BlockCell>
                    <BlockCell $col="2" $row="4" $top={14}>Job #: {"{job.no}"}</BlockCell>
                    <BlockCell $col="3" $row="4" />
                    <BlockCell $col="4 / 6" $row="1" $top={16} $wide>Title: {"{job.des}"}</BlockCell>
                    <BlockCell $col="4" $row="2" $top={8} $wide>Scale:</BlockCell>
                    <BlockCell $col="5" $row="2" $top={8}>Date:  {"{date}"}</BlockCell>
                    <BlockCell $col="4" $row="3 / 5" $top={4} $wide>DWG. By:</BlockCell>
                    <BlockCell $col="5" $row="3 / 5" $top={6}>Sheet #</BlockCell>
                    <DrawingName>{"{draw.name}"}</DrawingName>
                  </TitleBlock>
                </Frame>
              </Sheet>
            </Canvas>
          </Document>
        </WorkArea>

        <StatusBar>
          <span>This Product is Licensed to : CV Development Team</span>
          <StatusTools>
            <StatusText>Inches</StatusText>
            <StatusText>1/32</StatusText>
            <StatusViews>
              {icons.ruler}
              {icons.cross}
              {icons.gridDots}
              {icons.splitView}
            </StatusViews>
            {icons.warning}
            {icons.sizeGrip}
          </StatusTools>
        </StatusBar>
      </Window>
    </>
  );
}
